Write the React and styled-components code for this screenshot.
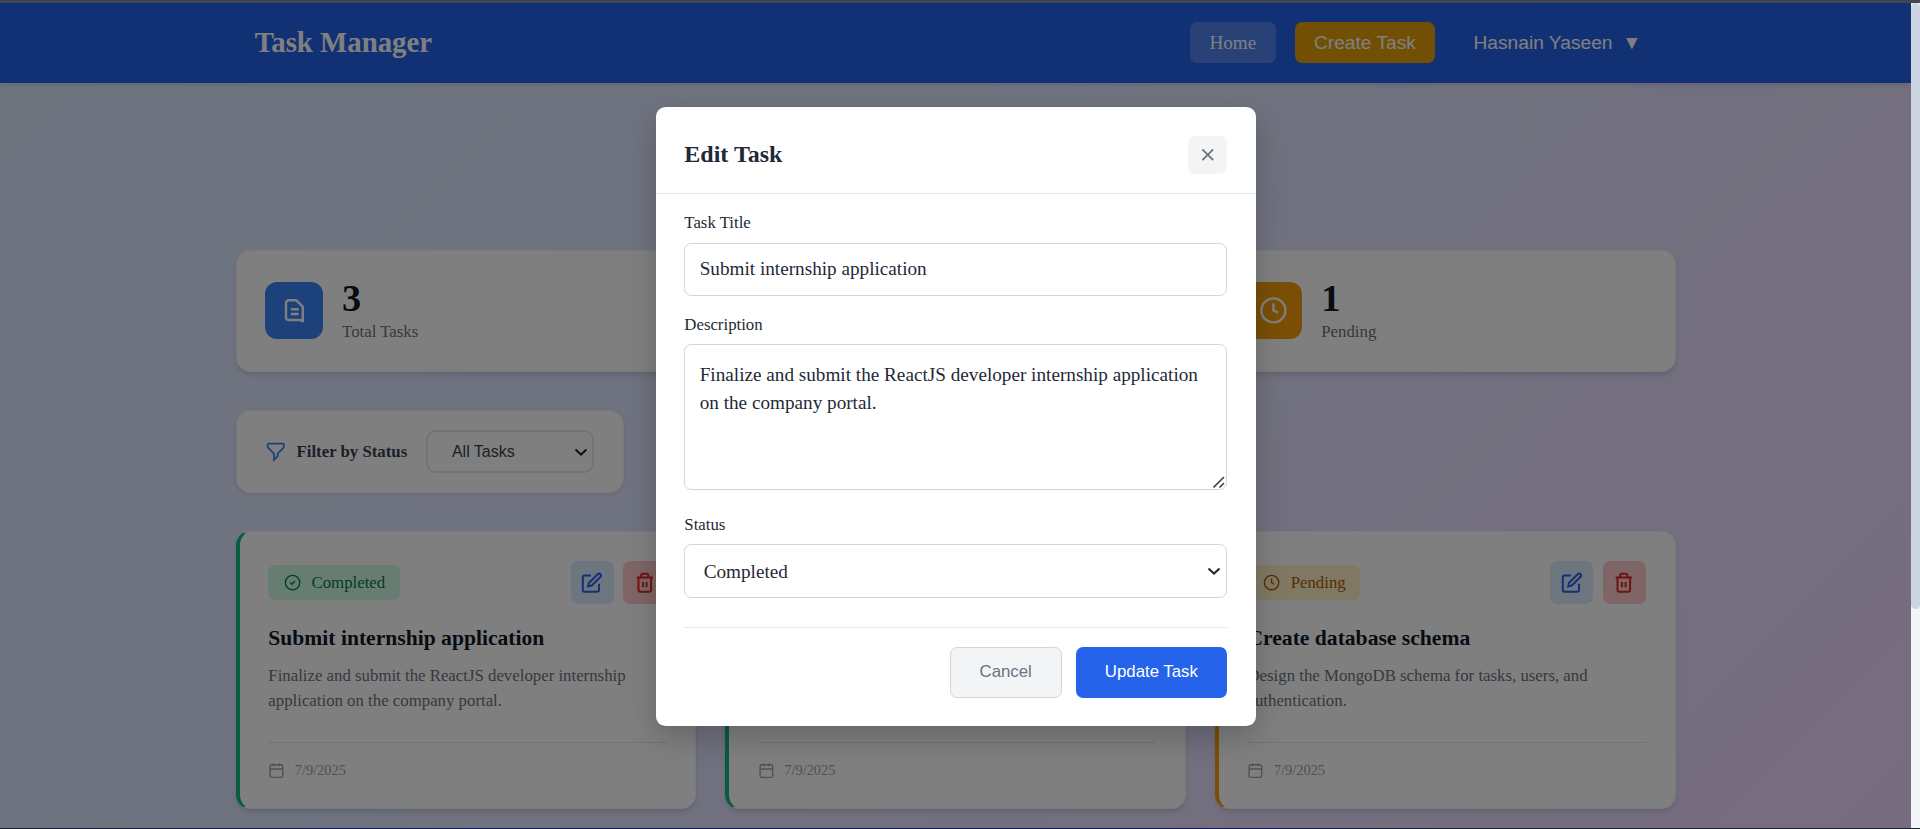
import React from 'react';
import styled, { createGlobalStyle, css } from 'styled-components';

const GlobalStyle = createGlobalStyle`
  *, *::before, *::after { box-sizing: border-box; margin: 0; padding: 0; }
  html { font-size: 19.2px; }
  body { margin: 0; overflow: hidden; font-family: 'Liberation Serif', 'Times New Roman', serif; color: #111827; }
  button, select { font-family: 'Liberation Sans', Arial, sans-serif; }
`;

const Window = styled.div`
  display: flex;
  flex-direction: column;
  height: 829px;
  overflow: hidden;
`;

const TopEdge = styled.div`
  flex: none;
  height: 3px;
  background: linear-gradient(#39405a, #504650 60%, #38405a);
`;

const BottomEdge = styled.div`
  flex: none;
  height: 1px;
  background: linear-gradient(90deg, #1b2230, #15175e 30%, #15175e 60%, #1b2230 75%);
`;

const Viewport = styled.div`
  position: relative;
  flex: 1;
  min-height: 0;
  display: flex;
  align-items: flex-start;
  overflow: hidden;
`;

const Page = styled.div`
  flex: 1;
  min-width: 0;
  height: 1123px;
  background: linear-gradient(135deg, #dbeafe 0%, #e0e4fe 45%, #f1d7fc 100%);
`;

const ScrollTrack = styled.div`
  flex: none;
  width: 9px;
  height: 100%;
  background: #f1f5f9;
`;

const ScrollThumb = styled.div`
  height: 606px;
  border-radius: 5px;
  background: #cbd5e1;
`;

const NavBar = styled.nav`
  height: 80px;
  background: #2563eb;
  box-shadow: 0 2px 5px rgba(0, 0, 0, 0.1);
`;

const Container = styled.div`
  width: 1440px;
  margin: 0 auto;
`;

const NavInner = styled(Container)`
  height: 100%;
  padding: 0 1rem 1px;
  display: flex;
  align-items: center;
  justify-content: space-between;
`;

const Brand = styled.h1`
  font-size: 1.5rem;
  font-weight: 700;
  line-height: 33px;
  padding-bottom: 1px;
  color: #fff;
`;

const NavLinks = styled.div`
  display: flex;
  align-items: center;
  gap: 1rem;
`;

const navItem = css`
  height: 41px;
  padding: 0 1rem;
  display: flex;
  align-items: center;
  border: none;
  border-radius: 0.375rem;
  font-size: 1rem;
  color: #fff;
`;

const HomeLink = styled.a`
  ${navItem}
  font-weight: 500;
  background: rgba(255, 255, 255, 0.2);
`;

const CreateButton = styled.button`
  ${navItem}
  background: #e3a008;
`;

const UserButton = styled.button`
  ${navItem}
  gap: 0.5rem;
  background: transparent;
`;

const Caret = styled.span`
  width: 15px;
  font-size: 1rem;
`;

const Main = styled(Container)`
  padding-top: 166.5px;
  display: flex;
  flex-direction: column;
  gap: 2rem;
`;

const Columns = styled.div`
  display: grid;
  grid-template-columns: repeat(3, 1fr);
  gap: 1.5rem;
`;

const Card = styled.section`
  background: #fff;
  border: 1px solid #f3f4f6;
  border-radius: 0.75rem;
  box-shadow: 0 4px 7px -1px rgba(0, 0, 0, 0.1), 0 2px 4px -1px rgba(0, 0, 0, 0.06);
`;

const StatCard = styled(Card)`
  height: 122.6px;
  padding: 0 1.5rem 1px;
  display: flex;
  align-items: center;
  gap: 1rem;
`;

const StatIcon = styled.div`
  width: 3rem;
  height: 3rem;
  border-radius: 0.625rem;
  display: flex;
  align-items: center;
  justify-content: center;
  color: #fff;
  background: ${(p) => p.$color};
`;

const StatNumber = styled.div`
  font-size: 2rem;
  font-weight: 700;
  line-height: 1;
  margin-bottom: 0.25rem;
`;

const StatLabel = styled.div`
  font-size: 0.875rem;
  font-weight: 500;
  color: #6b7280;
`;

const FilterCard = styled(Card)`
  align-self: flex-start;
  padding: 0 1.5rem;
  height: 82.5px;
  display: flex;
  align-items: center;
  gap: 1rem;
  box-shadow: 0 1px 4px rgba(0, 0, 0, 0.1);
`;

const FilterLabel = styled.div`
  display: flex;
  align-items: center;
  gap: 0.5rem;
  font-size: 0.875rem;
  font-weight: 600;
  color: #374151;
  svg { color: #3b82f6; }
`;

const SelectWrap = styled.div`
  position: relative;
  width: ${(p) => p.$width};
  svg { position: absolute; right: 6px; top: 50%; margin-top: -4px; }
`;

const FilterSelect = styled.select`
  appearance: none;
  display: block;
  width: 100%;
  height: 43px;
  padding: 0 23.5px;
  border: 2px solid #e5e7eb;
  border-radius: 0.5rem;
  background: #fff;
  font-size: 16px;
  color: #374151;
`;

const TaskCard = styled(Card)`
  min-height: 277.5px;
  padding: 1.5rem;
  border-left: 4px solid ${(p) => (p.$status === 'Completed' ? '#10b981' : '#f59e0b')};
  display: flex;
  flex-direction: column;
`;

const TaskHead = styled.div`
  display: flex;
  align-items: center;
  justify-content: space-between;
  margin-bottom: 1rem;
`;

const Badge = styled.span`
  height: 35px;
  padding: 0 0.75rem;
  display: inline-flex;
  align-items: center;
  gap: 0.5rem;
  border-radius: 0.375rem;
  font-size: 0.875rem;
  font-weight: 500;
  color: ${(p) => (p.$status === 'Completed' ? '#047857' : '#b45309')};
  background: ${(p) => (p.$status === 'Completed' ? '#d1fae5' : '#fef3c7')};
`;

const Actions = styled.div`
  display: flex;
  gap: 0.5rem;
`;

const ActionButton = styled.button`
  width: 43.1px;
  height: 42.8px;
  display: flex;
  align-items: center;
  justify-content: center;
  border: none;
  border-radius: 0.375rem;
  color: ${(p) => (p.$danger ? '#dc2626' : '#2563eb')};
  background: ${(p) => (p.$danger ? '#fecaca' : '#dbeafe')};
`;

const TaskTitle = styled.h3`
  font-size: 1.125rem;
  font-weight: 600;
  line-height: 1.4;
  margin-bottom: 0.5rem;
`;

const TaskText = styled.p`
  font-size: 0.875rem;
  line-height: 1.5;
  color: #6b7280;
`;

const TaskFoot = styled.div`
  margin-top: auto;
  padding-top: 1rem;
  border-top: 1px solid #e5e7eb;
  display: flex;
  align-items: center;
  gap: 0.5rem;
  font-size: 0.75rem;
  color: #9ca3af;
`;

const Overlay = styled.div`
  position: absolute;
  inset: 0 9px 0 0;
  display: flex;
  align-items: flex-start;
  justify-content: center;
  padding-top: 104px;
  background: rgba(0, 0, 0, 0.5);
`;

const Modal = styled.div`
  width: 600px;
  border-radius: 0.5rem;
  background: #fff;
  box-shadow: 0 12px 30px rgba(0, 0, 0, 0.2);
`;

const ModalHead = styled.header`
  padding: 1.5rem 1.5rem 1rem;
  border-bottom: 1px solid #e5e7eb;
  display: flex;
  align-items: center;
  justify-content: space-between;
`;

const ModalTitle = styled.h2`
  font-size: 1.25rem;
  font-weight: 600;
  color: #1f2937;
`;

const CloseButton = styled.button`
  width: 2rem;
  height: 2rem;
  display: flex;
  align-items: center;
  justify-content: center;
  border: none;
  border-radius: 0.375rem;
  color: #6b7280;
  background: #f3f4f6;
`;

const Form = styled.form`
  padding: 18.2px 1.5rem 28px;
`;

const Field = styled.div`
  display: flex;
  flex-direction: column;
  gap: ${(p) => p.$gap || '10.2px'};
  margin-bottom: ${(p) => p.$after || '1rem'};
`;

const Label = styled.label`
  font-size: 0.875rem;
  font-weight: 500;
  line-height: 19px;
  color: #1f2937;
`;

const control = css`
  display: block;
  width: 100%;
  border: 1px solid #d1d5db;
  border-radius: 0.375rem;
  background: #fff;
  font-family: 'Liberation Serif', 'Times New Roman', serif;
  font-size: 1rem;
  color: #1f2937;
  outline: none;
`;

const TextInput = styled.input`
  ${control}
  height: 52.8px;
  padding: 0 0.75rem 1px;
`;

const AreaWrap = styled.div`
  position: relative;
  svg { position: absolute; right: 2px; bottom: 2px; }
`;

const TextArea = styled.textarea`
  ${control}
  height: 146px;
  padding: 15.4px 0.75rem 0.75rem;
  line-height: 1.5;
  resize: none;
  overflow: hidden;
`;

const StatusSelect = styled.select`
  ${control}
  appearance: none;
  height: 54px;
  padding: 2px 18.4px 0;
`;

const ModalFoot = styled.footer`
  padding-top: 1rem;
  border-top: 1px solid #e5e7eb;
  display: flex;
  justify-content: flex-end;
  gap: 0.75rem;
`;

const FormButton = styled.button`
  height: 51px;
  padding: 0 1.5rem;
  border-radius: 0.375rem;
  font-size: 0.875rem;
  font-weight: 500;
  border: ${(p) => (p.$primary ? 'none' : '1px solid #d1d5db')};
  color: ${(p) => (p.$primary ? '#fff' : '#6b7280')};
  background: ${(p) => (p.$primary ? '#2563eb' : '#f3f4f6')};
`;

const Svg = ({ size, children, ...rest }) => (
  <svg width={size} height={size} viewBox="0 0 24 24" fill="none" stroke="currentColor" strokeWidth="2" {...rest}>
    {children}
  </svg>
);

const DocIcon = () => (
  <Svg size={28.8}>
    <path d="M9 11h6.500M9 15h6.500M17.300 21.200L19 20.800V9.400a1 1 0 00-.3-.7l-4.800-4.800a1 1 0 00-.7-.3H7a2 2 0 00-2 2V18a2 2 0 002 2h12" />
  </Svg>
);
const ClockIcon = ({ size }) => (
  <Svg size={size} strokeWidth={size > 20 ? 2 : 1.7}>
    <circle cx="12" cy="12" r={size > 20 ? 10 : 9} />
    <path d={size > 20 ? 'M12 6v6l4 2' : 'M12 7v5l3 2'} />
  </Svg>
);
const CheckIcon = () => (
  <Svg size={19.2} strokeWidth="1.7">
    <circle cx="12" cy="12" r="9" />
    <path d="M9 12l2 2 4-4" />
  </Svg>
);
const FunnelIcon = () => (
  <Svg size={21.6}>
    <path d="M3 4a1 1 0 011-1h16a1 1 0 011 1v2.586a1 1 0 01-.293.707l-6.414 6.414a1 1 0 00-.293.707V17l-4 4v-6.586a1 1 0 00-.293-.707L3.293 7.293A1 1 0 013 6.586V4z" />
  </Svg>
);
const EditIcon = () => (
  <Svg size={21.6} strokeWidth="2.2">
    <path d="M11 4H4a2 2 0 00-2 2v14a2 2 0 002 2h14a2 2 0 002-2v-7" />
    <path d="M18.5 2.5a2.121 2.121 0 013 3L12 15l-4 1 1-4 9.5-9.5z" />
  </Svg>
);
const TrashIcon = () => (
  <Svg size={21.6} strokeWidth="2.2">
    <path d="M3 6h18M19 6v14a2 2 0 01-2 2H7a2 2 0 01-2-2V6m3 0V4a2 2 0 012-2h4a2 2 0 012 2v2M10 11v6M14 11v6" />
  </Svg>
);
const CalendarIcon = () => (
  <Svg size={16.8}>
    <rect x="3" y="4" width="18" height="18" rx="2" />
    <path d="M16 2v4M8 2v4M3 10h18" />
  </Svg>
);
const CloseIcon = () => (
  <Svg size={21.6}>
    <path d="M18 6L6 18M6 6l12 12" />
  </Svg>
);
const Chevron = () => (
  <svg width="14" height="9" viewBox="0 0 14 9" fill="none" stroke="#1f2937" strokeWidth="2">
    <path d="M1.500 1.500L7 6.600l5.500-5.100" />
  </svg>
);
const Grip = () => (
  <svg width="12" height="12" viewBox="0 0 12 12" stroke="#444" strokeWidth="1.6">
    <path d="M.5 11.500L11 1M6.500 11.500L11 7" />
  </svg>
);

const tasks = [
  {
    status: 'Completed',
    title: 'Submit internship application',
    text: 'Finalize and submit the ReactJS developer internship application on the company portal.',
    date: '7/9/2025',
  },
  { status: 'Completed', date: '7/9/2025' },
  {
    status: 'Pending',
    title: 'Create database schema',
    text: 'Design the MongoDB schema for tasks, users, and authentication.',
    date: '7/9/2025',
  },
];

function Task({ status, title, text, date }) {
  return (
    <TaskCard $status={status}>
      {title && (
        <>
          <TaskHead>
            <Badge $status={status}>
              {status === 'Completed' ? <CheckIcon /> : <ClockIcon size={19.2} />}
              {status}
            </Badge>
            <Actions>
              <ActionButton><EditIcon /></ActionButton>
              <ActionButton $danger><TrashIcon /></ActionButton>
            </Actions>
          </TaskHead>
          <TaskTitle>{title}</TaskTitle>
          <TaskText>{text}</TaskText>
        </>
      )}
      <TaskFoot><CalendarIcon />{date}</TaskFoot>
    </TaskCard>
  );
}

function EditTaskModal() {
  return (
    <Modal>
      <ModalHead>
        <ModalTitle>Edit Task</ModalTitle>
        <CloseButton><CloseIcon /></CloseButton>
      </ModalHead>
      <Form>
        <Field $gap="11.4px">
          <Label>Task Title</Label>
          <TextInput defaultValue={tasks[0].title} />
        </Field>
        <Field $after="24.6px">
          <Label>Description</Label>
          <AreaWrap>
            <TextArea defaultValue={tasks[0].text} spellCheck={false} />
            <Grip />
          </AreaWrap>
        </Field>
        <Field $after="1.5rem">
          <Label>Status</Label>
          <SelectWrap $width="100%">
            <StatusSelect defaultValue="Completed"><option>Completed</option></StatusSelect>
            <Chevron />
          </SelectWrap>
        </Field>
        <ModalFoot>
          <FormButton type="button">Cancel</FormButton>
          <FormButton type="button" $primary>Update Task</FormButton>
        </ModalFoot>
      </Form>
    </Modal>
  );
}

export default function App() {
  return (
    <Window>
      <GlobalStyle />
      <TopEdge />
      <Viewport>
        <Page>
          <NavBar>
            <NavInner>
              <Brand>Task Manager</Brand>
              <NavLinks>
                <HomeLink>Home</HomeLink>
                <CreateButton>Create Task</CreateButton>
                <UserButton>Hasnain Yaseen <Caret>▼</Caret></UserButton>
              </NavLinks>
            </NavInner>
          </NavBar>
          <Main>
            <Columns>
              <StatCard>
                <StatIcon $color="#3b82f6"><DocIcon /></StatIcon>
                <div><StatNumber>3</StatNumber><StatLabel>Total Tasks</StatLabel></div>
              </StatCard>
              <StatCard />
              <StatCard>
                <StatIcon $color="#f59e0b"><ClockIcon size={28.8} /></StatIcon>
                <div><StatNumber>1</StatNumber><StatLabel>Pending</StatLabel></div>
              </StatCard>
            </Columns>
            <FilterCard>
              <FilterLabel><FunnelIcon />Filter by Status</FilterLabel>
              <SelectWrap $width="168px">
                <FilterSelect defaultValue="All Tasks"><option>All Tasks</option></FilterSelect>
                <Chevron />
              </SelectWrap>
            </FilterCard>
            <Columns>
              {tasks.map((t, i) => <Task key={i} {...t} />)}
            </Columns>
          </Main>
        </Page>
        <ScrollTrack><ScrollThumb /></ScrollTrack>
        <Overlay><EditTaskModal /></Overlay>
      </Viewport>
      <BottomEdge />
    </Window>
  );
}
